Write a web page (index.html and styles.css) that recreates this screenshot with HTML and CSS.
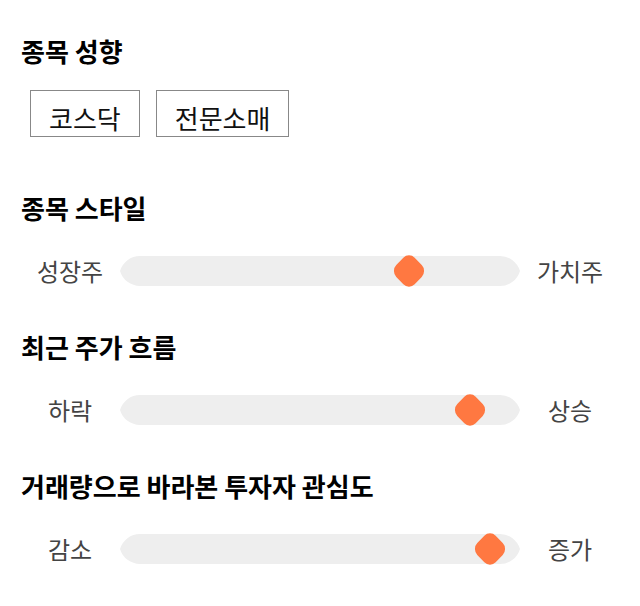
FILE: index.html
```html
<html>
  <head>
    <meta charset="utf-8">
    <title>종목 성향</title>
    <link rel="stylesheet" href="styles.css">
  </head>
  <body>
    <div class="page">
      <!-- 종목 성향 -->
      <div class="group group-tags">
        <h2 class="title">종목 성향</h2>
        <div class="tags">
          <span class="tag">코스닥</span>
          <span class="tag">전문소매</span>
        </div>
      </div>

      <!-- 종목 스타일 -->
      <div class="group">
        <h2 class="title">종목 스타일</h2>
        <div class="slider">
          <span class="label">성장주</span>
          <div class="track"><span class="thumb" style="left: 72.25%"></span></div>
          <span class="label">가치주</span>
        </div>
      </div>

      <!-- 최근 주가 흐름 -->
      <div class="group">
        <h2 class="title">최근 주가 흐름</h2>
        <div class="slider">
          <span class="label">하락</span>
          <div class="track"><span class="thumb" style="left: 87.5%"></span></div>
          <span class="label">상승</span>
        </div>
      </div>

      <!-- 투자자 관심도 -->
      <div class="group">
        <h2 class="title">거래량으로 바라본 투자자 관심도</h2>
        <div class="slider">
          <span class="label">감소</span>
          <div class="track"><span class="thumb" style="left: 92.5%"></span></div>
          <span class="label">증가</span>
        </div>
      </div>
    </div>
  </body>
</html>
```

FILE: styles.css
```css
body {
  margin: 0;
  background: #fff;
  font-family: "Noto Sans CJK KR", "Noto Sans", sans-serif;
  color: #000;
}

.page {
  display: flex;
  flex-direction: column;
  gap: 46px;
  padding: 36px 20px 20px 20px;
}

.group-tags {
  padding-bottom: 10px;
}

.title {
  margin: 0 0 33px 0;
  padding-left: 1px;
  font-size: 26px;
  line-height: 30px;
  font-weight: 700;
}

.group-tags .title {
  margin-bottom: 24px;
}

.tags {
  display: flex;
  gap: 16px;
  margin-left: 10px;
}

.tag {
  display: block;
  height: 34px;
  padding: 11px 18px 0 18px;
  border: 1px solid #888;
  font-size: 26px;
  line-height: 32px;
  color: #111;
}

.slider {
  display: flex;
  align-items: center;
  height: 30px;
}

.label {
  width: 100px;
  text-align: center;
  font-size: 24px;
  line-height: 30px;
  color: #444;
}

.track {
  position: relative;
  width: 400px;
  height: 30px;
}

/* forma della barra con le punte ai lati */
.track::before {
  content: "";
  position: absolute;
  top: 0;
  left: 0;
  right: 0;
  bottom: 0;
  background: #eeeeee;
  clip-path: path('M20,0 H380 A20.8,20.8 0 0 1 400,15 A20.8,20.8 0 0 1 380,30 H20 A20.8,20.8 0 0 1 0,15 A20.8,20.8 0 0 1 20,0 Z');
}

/* il cursore sta sopra la barra */
.thumb {
  position: absolute;
  top: 2px;
  width: 26px;
  height: 26px;
  margin-left: -13px;
  background: #ff7841;
  border-radius: 8px;
  transform: scaleY(1.04) rotate(45deg);
}
```
